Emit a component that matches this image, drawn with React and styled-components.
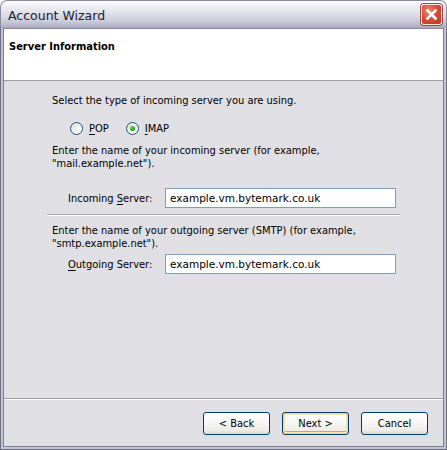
import React from 'react';
import styled, { createGlobalStyle, css } from 'styled-components';

const GlobalStyle = createGlobalStyle`
  html, body {
    margin: 0;
    padding: 0;
    background: #ffffff;
  }
  body {
    font-family: "DejaVu Sans Condensed", "DejaVu Sans", sans-serif;
    font-size: 11px;
    color: #000;
  }
`;

const Window = styled.div`
  width: 447px;
  height: 450px;
  display: flex;
  flex-direction: column;
  box-sizing: border-box;
`;

const TitleBar = styled.div`
  height: 28px;
  flex: none;
  box-sizing: border-box;
  display: flex;
  align-items: center;
  justify-content: space-between;
  padding: 0 4px 0 7px;
  border: 1px solid #8a8aa0;
  border-bottom: none;
  border-radius: 7px 7px 0 0;
  background: linear-gradient(
    #ffffff 0%,
    #eeeef4 20%,
    #e0e0ea 45%,
    #d0d0de 70%,
    #b6b6ca 92%,
    #a4a4b8 100%
  );
`;

const Title = styled.span`
  font-family: "DejaVu Sans", sans-serif;
  font-size: 12.5px;
  color: #202030;
  margin-top: 1px;
`;

const CloseButton = styled.div`
  width: 21px;
  height: 21px;
  box-sizing: border-box;
  border: 1px solid #fbe4de;
  border-radius: 3px;
  background: radial-gradient(circle at 35% 30%, #ee8a74 0%, #d8503a 45%, #b8321f 100%);
  box-shadow: 0 0 0 1px #a04a40;
  display: flex;
  align-items: center;
  justify-content: center;
`;

const Frame = styled.div`
  flex: 1;
  display: flex;
  flex-direction: column;
  border: 1px solid #6e6e86;
  border-top: none;
  padding: 0 2px 2px 2px;
  background: #c4c4d2;
  min-height: 0;
`;

const Inner = styled.div`
  flex: 1;
  display: flex;
  flex-direction: column;
  border: 1px solid #7c7c92;
  border-top: 1px solid #8a8aa0;
  background: #e0dfe3;
  min-height: 0;
`;

const Header = styled.div`
  height: 52px;
  flex: none;
  box-sizing: border-box;
  background: #ffffff;
  border-bottom: 1px solid #9d9da1;
  padding: 11px 0 0 5px;
`;

const HeaderTitle = styled.div`
  font-weight: bold;
  font-size: 11px;
  line-height: 13px;
`;

const Body = styled.div`
  flex: 1;
  padding: 13px 43px 0 43px;
`;

const Group = styled.div`
  padding: 0 4px 0 5px;
`;

const Text = styled.div`
  line-height: 13px;
  margin-top: ${(p) => p.$top || 0}px;
`;

const RadioRow = styled.div`
  display: flex;
  align-items: center;
  margin: 15px 0 0 18px;
  height: 13px;
`;

const RadioItem = styled.label`
  display: flex;
  align-items: center;
  gap: 6px;
  margin-right: 17px;
  line-height: 13px;
`;

const RadioCircle = styled.span`
  width: 13px;
  height: 13px;
  box-sizing: border-box;
  border-radius: 50%;
  border: 1px solid #1d5281;
  background: linear-gradient(135deg, #dcdcd7 0%, #f2f2ee 50%, #ffffff 100%);
  display: flex;
  align-items: center;
  justify-content: center;
  ${(p) =>
    p.$checked &&
    css`
      &::after {
        content: '';
        width: 5px;
        height: 5px;
        border-radius: 50%;
        background: radial-gradient(circle at 40% 35%, #5fd45f 0%, #21a121 60%, #1a7f1a 100%);
      }
    `}
`;

const Key = styled.span`
  text-decoration: underline;
  text-underline-offset: 2px;
`;

const FieldRow = styled.div`
  display: flex;
  align-items: center;
  margin-top: ${(p) => p.$top}px;
  padding-left: 16px;
`;

const FieldLabel = styled.label`
  width: 97px;
  flex: none;
`;

const Input = styled.div`
  width: 231px;
  height: 20px;
  box-sizing: border-box;
  border: 1px solid #7f9db9;
  background: #ffffff;
  padding: 0 4px;
  display: flex;
  align-items: center;
  font-family: "DejaVu Sans", sans-serif;
  font-size: 10.5px;
`;

const Separator = styled.hr`
  margin: 6px 0 0 0;
  border: none;
  border-top: 1px solid #a7a6aa;
  border-bottom: 1px solid #ffffff;
  height: 0;
`;

const Footer = styled.div`
  height: 48px;
  flex: none;
  box-sizing: border-box;
  border-top: 1px solid #9d9da1;
  box-shadow: inset 0 1px 0 #ffffff;
  display: flex;
  justify-content: flex-end;
  align-items: flex-start;
  gap: 12px;
  padding: 13px 15px 0 0;
`;

const Button = styled.button`
  width: 67px;
  height: 23px;
  box-sizing: border-box;
  border: 1px solid #003c74;
  border-radius: 3px;
  font-family: "DejaVu Sans Condensed", "DejaVu Sans", sans-serif;
  font-size: 11px;
  color: #000;
  padding: 0;
  background: linear-gradient(#ffffff 0%, #f8f8f6 40%, #ecebe6 85%, #d6d0c5 100%);
  box-shadow: ${(p) =>
    p.$default
      ? 'inset 0 0 0 1px #f9d38e, inset 0 0 0 2px #fbe2a8, inset 0 -2px 0 1px #e5a23c'
      : 'inset 0 -1px 0 #e0ddd4'};
`;

const XIcon = () => (
  <svg width="13" height="13" viewBox="0 0 13 13">
    <path d="M2.5 2.5 L10.5 10.5 M10.5 2.5 L2.5 10.5" stroke="#ffffff" strokeWidth="2.6" strokeLinecap="square" />
  </svg>
);

export default function App() {
  return (
    <>
      <GlobalStyle />
      <Window>
        <TitleBar>
          <Title>Account Wizard</Title>
          <CloseButton>
            <XIcon />
          </CloseButton>
        </TitleBar>
        <Frame>
          <Inner>
            <Header>
              <HeaderTitle>Server Information</HeaderTitle>
            </Header>
            <Body>
              <Group>
                <Text>Select the type of incoming server you are using.</Text>
                <RadioRow>
                  <RadioItem>
                    <RadioCircle />
                    <span><Key>P</Key>OP</span>
                  </RadioItem>
                  <RadioItem>
                    <RadioCircle $checked />
                    <span><Key>I</Key>MAP</span>
                  </RadioItem>
                </RadioRow>
                <Text $top={9}>
                  Enter the name of your incoming server (for example,
                  <br />
                  "mail.example.net").
                </Text>
                <FieldRow $top={18}>
                  <FieldLabel>Incoming <Key>S</Key>erver:</FieldLabel>
                  <Input>example.vm.bytemark.co.uk</Input>
                </FieldRow>
              </Group>
              <Separator />
              <Group>
                <Text $top={8}>
                  Enter the name of your outgoing server (SMTP) (for example,
                  <br />
                  "smtp.example.net").
                </Text>
                <FieldRow $top={4}>
                  <FieldLabel><Key>O</Key>utgoing Server:</FieldLabel>
                  <Input>example.vm.bytemark.co.uk</Input>
                </FieldRow>
              </Group>
            </Body>
            <Footer>
              <Button>&lt; Back</Button>
              <Button $default>Next &gt;</Button>
              <Button>Cancel</Button>
            </Footer>
          </Inner>
        </Frame>
      </Window>
    </>
  );
}
